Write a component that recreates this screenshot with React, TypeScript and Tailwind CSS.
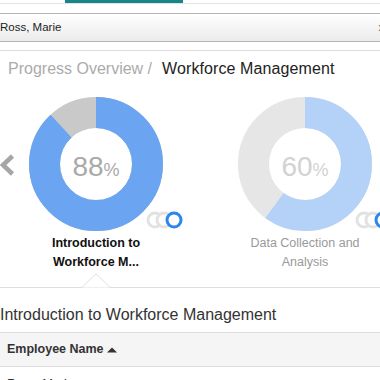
import React from "react";

type Course = {
  id: number;
  title: string;
  percent: number;
  active: boolean;
};

const courses: Course[] = [
  { id: 1, title: "Introduction to Workforce M...", percent: 88, active: true },
  { id: 2, title: "Data Collection and Analysis", percent: 60, active: false },
];

const R = 51.5;
const C = 2 * Math.PI * R;

const Donut = ({ percent, active }: { percent: number; active: boolean }) => {
  const fill = active ? "#6ba4f1" : "#b4d1f7";
  const track = active ? "#c9c9c9" : "#e6e6e6";
  return (
    <div className="relative w-[134px] h-[134px]">
      <svg width="134" height="134" viewBox="0 0 134 134" className="-rotate-90">
        <circle cx="67" cy="67" r={R} fill="none" stroke={track} strokeWidth="31" />
        <circle
          cx="67"
          cy="67"
          r={R}
          fill="none"
          stroke={fill}
          strokeWidth="31"
          strokeDasharray={`${(C * percent) / 100} ${C}`}
        />
      </svg>
      <div
        className={`absolute inset-0 flex items-center justify-center pt-[5px] ${
          active ? "text-[#a9a9a9]" : "text-[#d2d2d2]"
        }`}
      >
        <span className="text-[28px] leading-none">{percent}</span>
        <span className="text-[18px] leading-none mt-[6px]">%</span>
      </div>
    </div>
  );
};

const Rings = () => (
  <svg width="46" height="20" viewBox="0 0 46 20">
    <circle cx="9" cy="10" r="7" fill="white" stroke="#e2e2e2" strokeWidth="3" />
    <circle cx="18" cy="10" r="7" fill="white" stroke="#e2e2e2" strokeWidth="3" />
    <circle cx="28" cy="10" r="7" fill="white" stroke="#2b86ee" strokeWidth="3" />
  </svg>
);

export default function App() {
  return (
    <div className="w-[380px] h-[380px] overflow-hidden bg-white font-['Liberation_Sans',Arial,sans-serif] text-[#222]">
      {/* top tabs strip */}
      <div className="h-[4px] border-b border-[#e3e3e3]">
        <div className="ml-[65px] w-[118px] h-[3px] bg-[#17858a]"></div>
      </div>

      {/* selected employee */}
      <div className="mt-[9px] h-[29px] border-y border-[#b4b4b4] bg-gradient-to-b from-white to-[#ebebeb] flex items-center justify-between">
        <span className="text-[11.5px] text-[#222] pt-[1px]">Ross, Marie</span>
        <span className="text-[11px] text-[#666] mr-[-4px]">x</span>
      </div>

      <div className="mt-[8px] border-t border-[#dcdcdc]"></div>

      {/* breadcrumb */}
      <div className="mt-[8px] pl-[8px] h-[20px] flex items-center text-[16px] leading-[20px]">
        <span className="text-[#ababab]">Progress Overview /</span>
        <span className="ml-[10px] text-[#222] tracking-[0.1px]">Workforce Management</span>
      </div>

      {/* carousel */}
      <div className="relative pt-[18px] border-b border-[#dedede] h-[209px]">
        <svg
          width="15"
          height="24"
          viewBox="0 0 15 24"
          className="absolute left-0 top-[74px]"
        >
          <polyline
            points="12.5,3 3,12 12.5,21"
            fill="none"
            stroke="#a6a6a6"
            strokeWidth="4.5"
          />
        </svg>

        <div className="flex gap-[17px]">
          {courses.map((course) => (
            <div key={course.id} className="relative w-[192px] shrink-0 flex flex-col items-center">
              <Donut percent={course.percent} active={course.active} />
              <div className="absolute left-[146px] top-[113px]">
                <Rings />
              </div>
              <p
                className={`mt-[3px] w-[120px] text-center text-[12.5px] leading-[18.5px] ${
                  course.active ? "font-bold text-[#111]" : "text-[#9a9a9a]"
                }`}
              >
                {course.id === 1 ? (
                  <>
                    Introduction to
                    <br />
                    Workforce M...
                  </>
                ) : (
                  <>
                    Data Collection and
                    <br />
                    Analysis
                  </>
                )}
              </p>
            </div>
          ))}
        </div>

        {/* pointer notch */}
        <svg
          width="28"
          height="15"
          viewBox="0 0 28 15"
          className="absolute left-[82px] bottom-[-1px]"
        >
          <polygon points="0,14.5 14,1 28,14.5" fill="white" />
          <polyline points="0,14.5 13,1.5 15,1.5 28,14.5" fill="none" stroke="#dedede" strokeWidth="1" />
        </svg>
      </div>

      {/* detail */}
      <h2 className="mt-[17px] text-[16px] leading-[20px] text-[#333]">
        Introduction to Workforce Management
      </h2>

      <div className="mt-[7px] h-[35px] border-y border-[#dcdcdc] bg-[#f5f5f5] flex items-center pl-[7px]">
        <span className="text-[12.5px] font-bold text-[#333]">Employee Name</span>
        <svg width="10" height="6" viewBox="0 0 10 6" className="ml-[3px]">
          <polygon points="0,5.5 5,0.5 10,5.5" fill="#333" />
        </svg>
      </div>

      <div className="pl-[7px] pt-[8px] text-[12.5px] text-[#333]">Ross, Marie</div>
    </div>
  );
}
